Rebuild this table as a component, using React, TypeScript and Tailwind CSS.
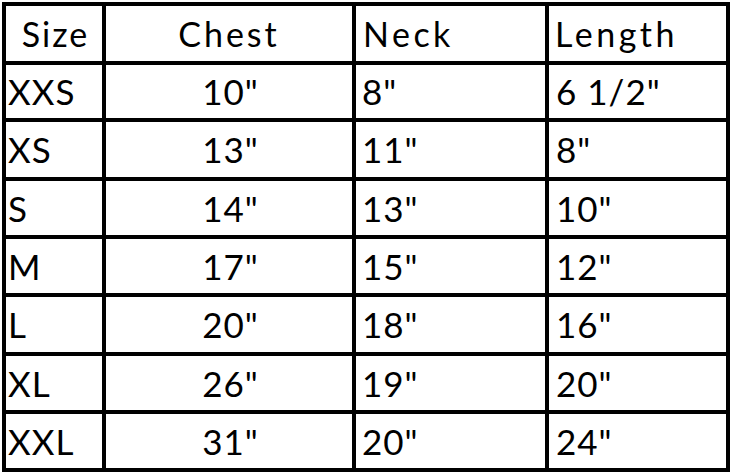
import React from "react";

const rows: [string, string, string, string][] = [
  ["XXS", "10\"", "8\"", "6 1/2\""],
  ["XS", "13\"", "11\"", "8\""],
  ["S", "14\"", "13\"", "10\""],
  ["M", "17\"", "15\"", "12\""],
  ["L", "20\"", "18\"", "16\""],
  ["XL", "26\"", "19\"", "20\""],
  ["XXL", "31\"", "20\"", "24\""],
];

export default function App() {
  return (
    <div className="w-[736px] h-[476px] bg-white pl-[2px] pt-[2px]" style={{ fontFamily: "Lato, 'Open Sans', sans-serif" }}>
      <div className="grid w-[728px] grid-cols-[96px_246px_189px_177px] grid-rows-[55px_53px_55px_54px_54px_55px_54px_54px] gap-[4px] border-[4px] border-black bg-black text-black">
        <div className="flex items-center justify-center bg-white pl-[3px] text-[34px] leading-none tracking-[2px]">Size</div>
        <div className="flex items-center justify-center bg-white text-[34px] leading-none tracking-[3px]">Chest</div>
        <div className="flex items-center bg-white pl-[7px] text-[34px] leading-none tracking-[3.5px]">Neck</div>
        <div className="flex items-center bg-white pl-[6px] text-[34px] leading-none tracking-[3.5px]">Length</div>
        {rows.map((r) => (
          <React.Fragment key={r[0]}>
            <div className="flex items-center bg-white pl-[2px] text-[35px] leading-none tracking-[1px]">{r[0]}</div>
            <div className="flex items-center justify-center bg-white pl-[3px] text-[35px] leading-none tracking-[1px]">{r[1]}</div>
            <div className="flex items-center bg-white pl-[6px] text-[35px] leading-none tracking-[1px]">{r[2]}</div>
            <div className="flex items-center bg-white pl-[7px] text-[35px] leading-none tracking-[1px]">{r[3]}</div>
          </React.Fragment>
        ))}
      </div>
    </div>
  );
}
